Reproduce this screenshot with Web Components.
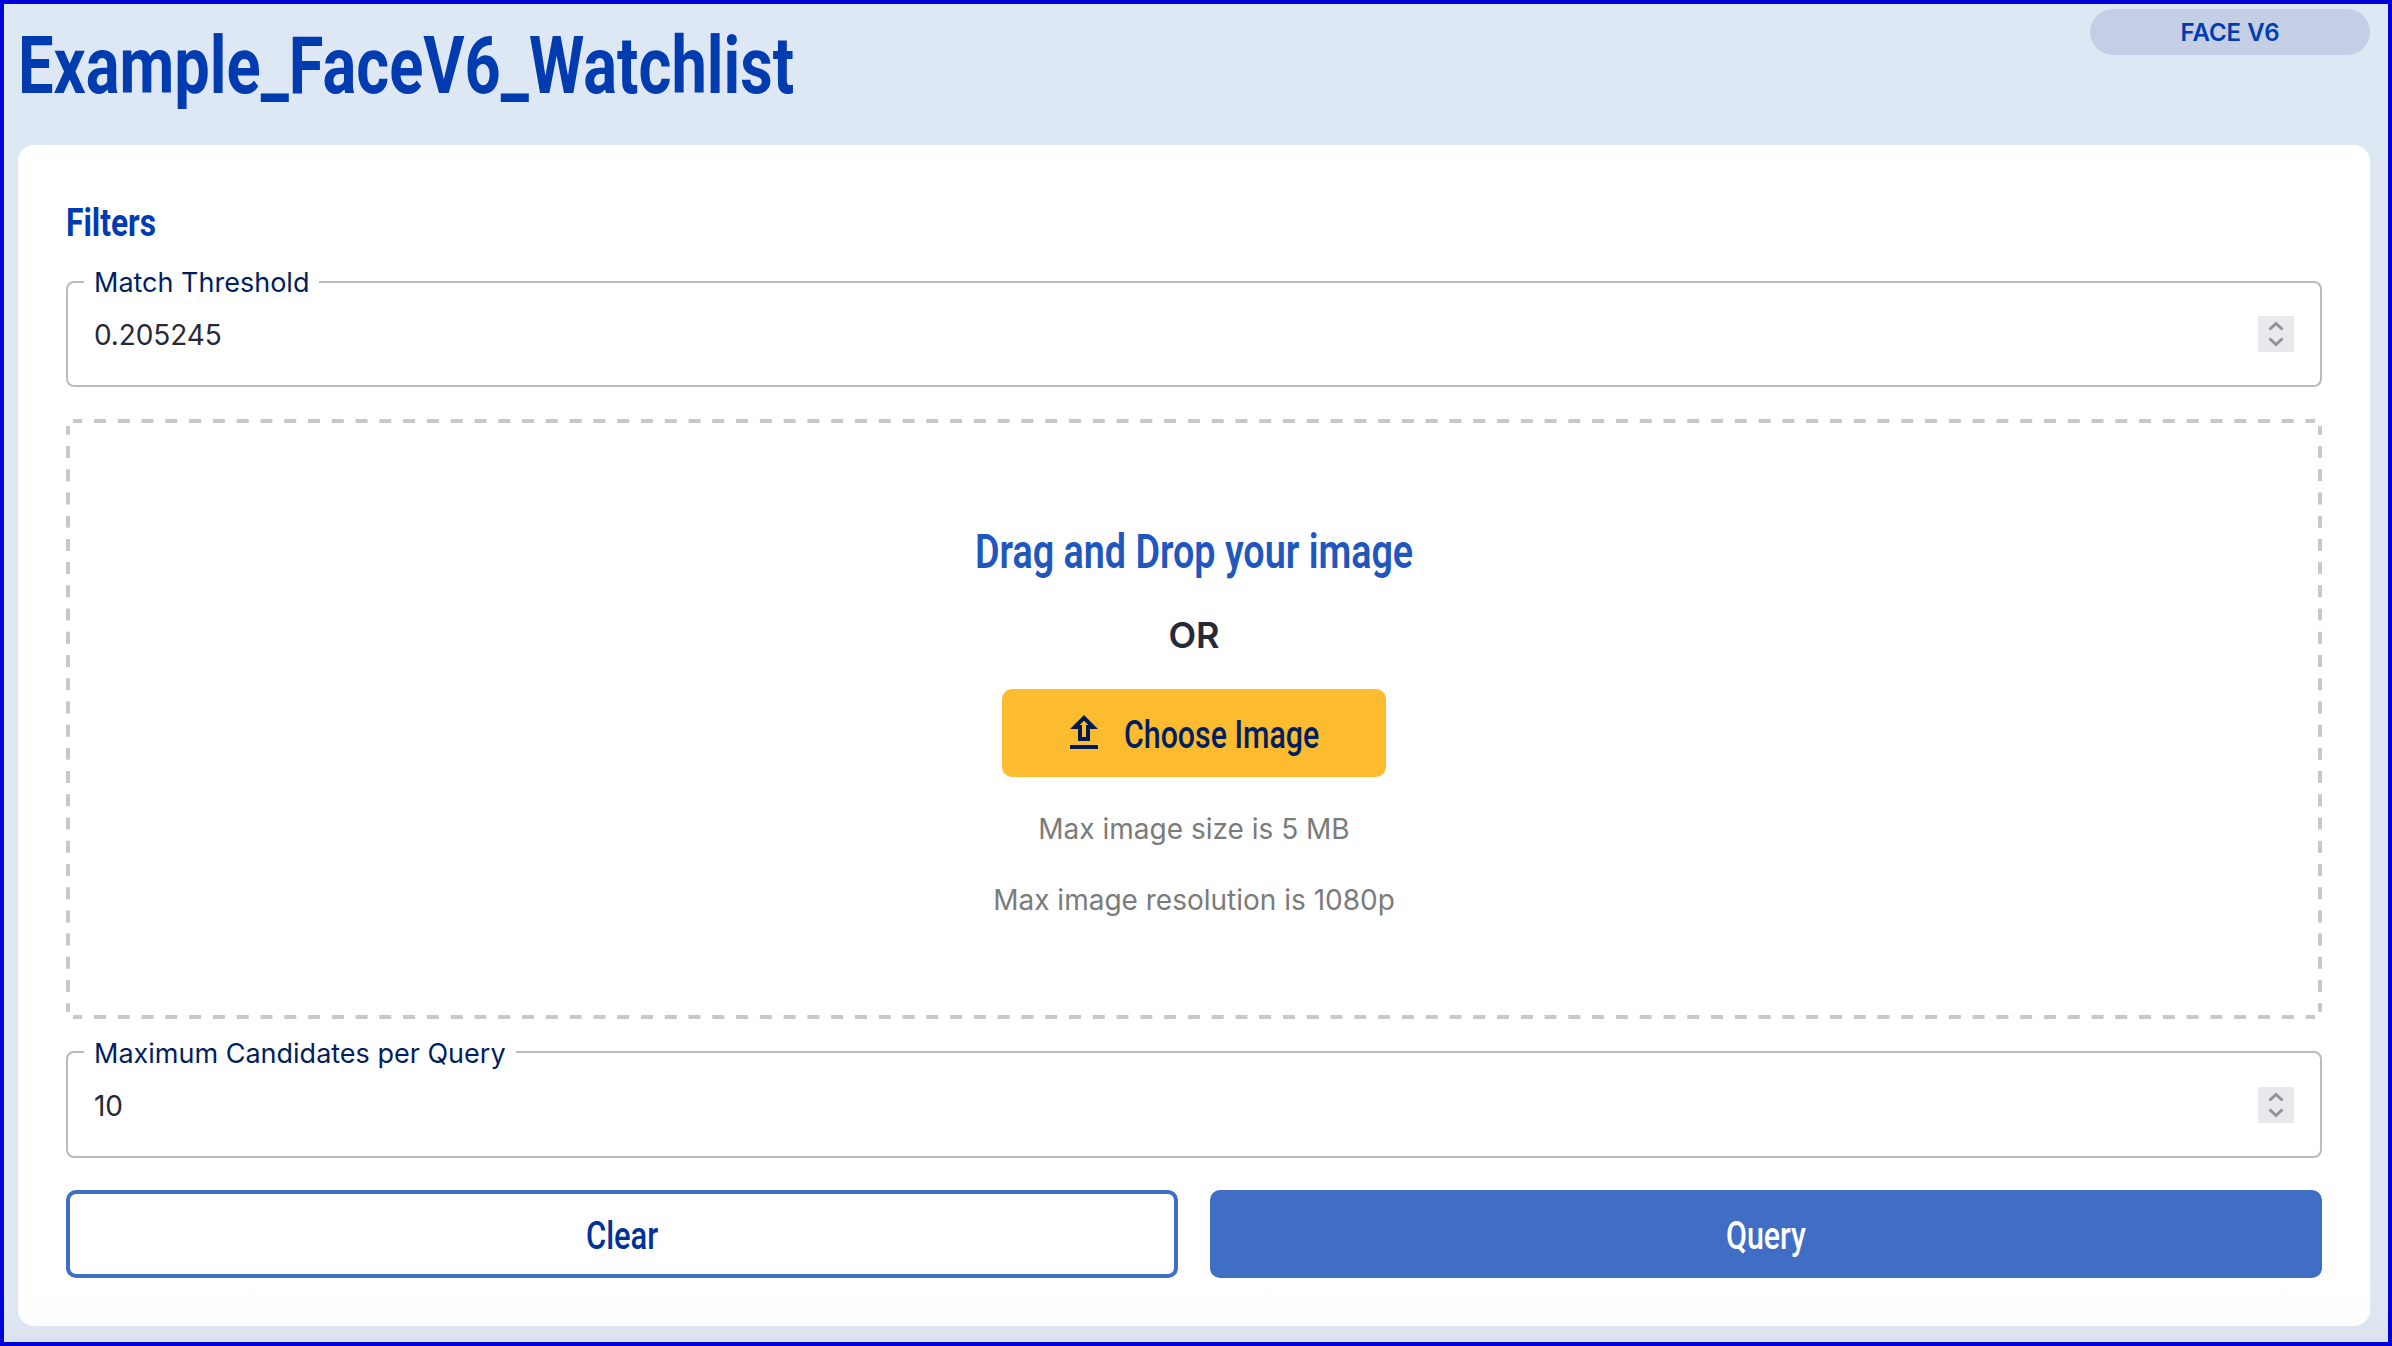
<!DOCTYPE html>
<html lang="en">
<head>
<meta charset="utf-8">
<title>Example_FaceV6_Watchlist</title>
<style>
    body {
        margin: 0;
        font-family: Inter, "Liberation Sans", sans-serif;
    }
</style>
</head>
<body>
<watchlist-page>
    <fit-text slot="title" width="776" size="79" weight="700">Example_FaceV6_Watchlist</fit-text>
    <type-chip slot="chip">FACE V6</type-chip>

    <fit-text class="filters" width="90" size="39.5" weight="700">Filters</fit-text>
    <number-field label="Match Threshold" value="0.205245"></number-field>
    <drop-zone></drop-zone>
    <number-field label="Maximum Candidates per Query" value="10"></number-field>
    <button-row>
        <action-button kind="outlined"><fit-text width="72" size="39.5" weight="500">Clear</fit-text></action-button>
        <action-button kind="filled"><fit-text width="80" size="39.5" weight="500">Query</fit-text></action-button>
    </button-row>
</watchlist-page>

<script>
// Condensed headline text: squeezes its content to the given width.
class FitText extends HTMLElement {
    connectedCallback() {
        const shadow = this.attachShadow({ mode: "open" });
        const width = Number(this.getAttribute("width"));

        shadow.innerHTML = `
        <style>
            :host {
                display: block;
                width: ${width}px;
                font-family: Roboto, "Liberation Sans", sans-serif;
                font-size: ${this.getAttribute("size")}px;
                font-weight: ${this.getAttribute("weight")};
                line-height: 1.2;
                white-space: nowrap;
            }

            span {
                display: inline-block;
                vertical-align: top;
                transform-origin: 0 0;
            }
        </style>

        <span><slot></slot></span>`;

        const span = shadow.querySelector("span");
        span.style.transform = `scaleX(${width / span.offsetWidth})`;
    }
}

class TypeChip extends HTMLElement {
    connectedCallback() {
        const shadow = this.attachShadow({ mode: "open" });

        shadow.innerHTML = `
        <style>
            :host {
                display: block;
                box-sizing: border-box;
                width: 280px;
                height: 46px;
                padding-top: 1px;
                border-radius: 23px;
                background: #c4cfe6;
                color: #003cb0;
                font-size: 24px;
                font-weight: 600;
                line-height: 46px;
                text-align: center;
            }
        </style>

        <slot></slot>`;
    }
}

class NumberField extends HTMLElement {
    connectedCallback() {
        const shadow = this.attachShadow({ mode: "open" });

        shadow.innerHTML = `
        <style>
            :host {
                display: block;
                margin-bottom: 32px;
            }

            fieldset {
                box-sizing: border-box;
                height: 123.5px;
                margin: -17px 0 0;
                padding: 0 26px;
                border: 2px solid #bbb;
                border-radius: 8px;
                min-width: 0;
            }

            legend {
                box-sizing: border-box;
                height: 36px;
                margin-left: -10px;
                padding: 2.5px 10px 0;
                color: #001f60;
                font-size: 27px;
                line-height: 33px;
            }

            .row {
                display: flex;
                align-items: center;
                justify-content: space-between;
                height: 69px;
                color: #262a38;
                font-size: 28px;
                letter-spacing: -0.1px;
            }

            .row span {
                padding-top: 2px;
            }

            svg {
                display: block;
                background: #e9e8ed;
            }
        </style>

        <fieldset>
            <legend>${this.getAttribute("label")}</legend>
            <div class="row">
                <span>${this.getAttribute("value")}</span>
                <svg width="36" height="36" viewBox="0 0 36 36" fill="none" stroke="#9391a0" stroke-width="3">
                    <path d="M11.5 13.5L18 7.5L24.5 13.5M11.5 22.5L18 28.5L24.5 22.5"/>
                </svg>
            </div>
        </fieldset>`;
    }
}

class DropZone extends HTMLElement {
    connectedCallback() {
        const shadow = this.attachShadow({ mode: "open" });

        shadow.innerHTML = `
        <style>
            :host {
                display: flex;
                flex-direction: column;
                align-items: center;
                box-sizing: border-box;
                position: relative;
                height: 600px;
                margin-bottom: 32px;
                padding-top: 105px;
            }

            .outline {
                position: absolute;
                top: 0;
                left: 0;
                border-radius: 8px;
            }

            .drag {
                color: #1f57bf;
            }

            .or {
                margin: 32px 0 32px;
                color: #262a38;
                font-size: 36px;
                font-weight: 600;
                line-height: 44px;
            }

            button {
                display: flex;
                align-items: center;
                width: 384px;
                height: 88px;
                margin: 0 0 35px;
                padding: 0 0 0 58px;
                border: 0;
                border-radius: 10px;
                background: #fdbb30;
                color: #001f60;
            }

            button fit-text {
                margin: 3px 0 0 16px;
                text-align: left;
            }

            p {
                margin: 0 0 37px;
                color: #7b7b7b;
                font-size: 28px;
                line-height: 34px;
            }
        </style>

        <svg class="outline" width="2256" height="600" fill="none" stroke="#c8c8c8" stroke-width="4">
            <path d="M7 2H2249M7 598H2249" stroke-dasharray="12 11.78" stroke-dashoffset="2.78"/>
            <path d="M2 7V593M2254 7V593" stroke-dasharray="12 11.22" stroke-dashoffset="3.22"/>
        </svg>
        <fit-text class="drag" width="438" size="47.5" weight="600">Drag and Drop your image</fit-text>
        <div class="or">OR</div>
        <button>
            <svg width="48" height="48" viewBox="0 0 24 24" fill="#001a50">
                <path d="M9 16h6v-6h4l-7-7-7 7h4v6zm3-10.17L14.17 8H13v6h-2V8H9.83L12 5.83zM5 18h14v2H5z"/>
            </svg>
            <fit-text width="195" size="39.5" weight="500">Choose Image</fit-text>
        </button>
        <p>Max image size is 5 MB</p>
        <p>Max image resolution is 1080p</p>`;
    }
}

class ButtonRow extends HTMLElement {
    connectedCallback() {
        const shadow = this.attachShadow({ mode: "open" });

        shadow.innerHTML = `
        <style>
            :host {
                display: grid;
                grid-template-columns: 1fr 1fr;
                gap: 32px;
            }
        </style>

        <slot></slot>`;
    }
}

class ActionButton extends HTMLElement {
    connectedCallback() {
        const shadow = this.attachShadow({ mode: "open" });

        shadow.innerHTML = `
        <style>
            button {
                display: flex;
                align-items: center;
                justify-content: center;
                width: 100%;
                height: 88px;
                margin: 0;
                padding: 4px 0 0;
                border: 4px solid #406ec4;
                border-radius: 10px;
                background: #406ec4;
                color: #fff;
                text-align: left;
            }

            :host([kind="outlined"]) button {
                background: transparent;
                color: #003399;
            }
        </style>

        <button><slot></slot></button>`;
    }
}

class WatchlistPage extends HTMLElement {
    connectedCallback() {
        const shadow = this.attachShadow({ mode: "open" });

        shadow.innerHTML = `
        <style>
            :host {
                display: flex;
                flex-direction: column;
                box-sizing: border-box;
                height: 1346px;
                padding: 0 18px 16px 14px;
                border: 4px solid #0000d8;
                background: linear-gradient(#dee8f4 1290px, #dce3f0);
                color: #003cb0;
            }

            header {
                display: flex;
                justify-content: space-between;
                height: 141px;
            }

            .title {
                padding-top: 15px;
            }

            .chip {
                padding-top: 5px;
            }

            main {
                flex: 1;
                box-sizing: border-box;
                padding: 54px 48px 0;
                border-radius: 16px;
                background: linear-gradient(#fff 1130px, #fdfdfd);
            }

            ::slotted(.filters) {
                margin-bottom: 34.3px;
            }
        </style>

        <header>
            <div class="title"><slot name="title"></slot></div>
            <div class="chip"><slot name="chip"></slot></div>
        </header>
        <main><slot></slot></main>`;
    }
}

customElements.define("watchlist-page", WatchlistPage);
customElements.define("fit-text", FitText);
customElements.define("type-chip", TypeChip);
customElements.define("number-field", NumberField);
customElements.define("drop-zone", DropZone);
customElements.define("button-row", ButtonRow);
customElements.define("action-button", ActionButton);
</script>
</body>
</html>
